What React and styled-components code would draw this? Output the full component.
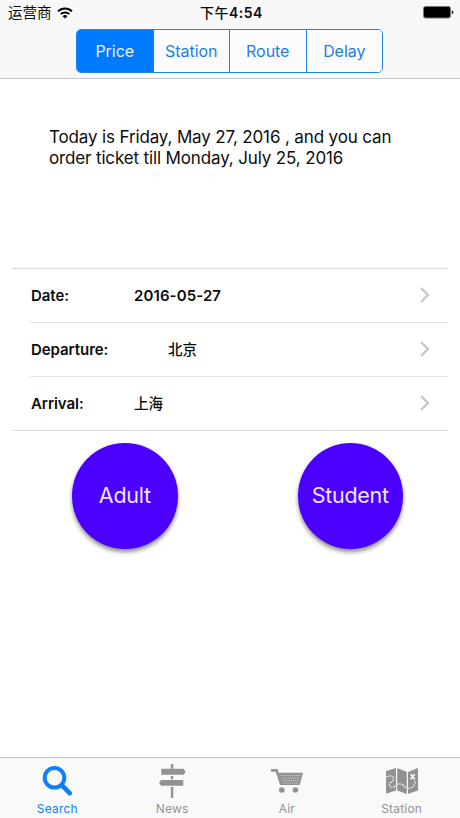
import React from "react";
import styled, { createGlobalStyle } from "styled-components";

const segments = ["Price", "Station", "Route", "Delay"];

const rows = [
    { label: "Date:", value: "2016-05-27", weight: 600 },
    { label: "Departure:", value: "北京", weight: 500, inset: 34 },
    { label: "Arrival:", value: "上海", weight: 500 },
];

const tabs = [
    { label: "Search", icon: SearchIcon },
    { label: "News", icon: SignIcon },
    { label: "Air", icon: CartIcon },
    { label: "Station", icon: MapIcon },
];

function App() {
    return (
        <Screen>
            <GlobalStyle />
            <NavBar>
                <StatusBar>
                    <Carrier>
                        运营商
                        <WifiIcon />
                    </Carrier>
                    <Clock>
                        <Meridiem>下午</Meridiem>4:54
                    </Clock>
                    <BatterySlot>
                        <BatteryIcon />
                    </BatterySlot>
                </StatusBar>
                <Segmented>
                    {segments.map((name, i) => (
                        <Segment key={name} $active={i === 0}>
                            {name}
                        </Segment>
                    ))}
                </Segmented>
            </NavBar>
            <Notice>
                Today is Friday, May 27, 2016 , and you can
                <br />
                order ticket till Monday, July 25, 2016
            </Notice>
            <Form>
                {rows.map((row) => (
                    <Row key={row.label}>
                        <Label>{row.label}</Label>
                        <Value $inset={row.inset} $weight={row.weight}>
                            {row.value}
                        </Value>
                        <ChevronIcon />
                    </Row>
                ))}
            </Form>
            <Actions>
                <RoundButton>Adult</RoundButton>
                <RoundButton>Student</RoundButton>
            </Actions>
            <TabBar>
                {tabs.map(({ label, icon: Icon }, i) => (
                    <Tab key={label} $active={i === 0}>
                        <Icon />
                        <TabLabel>{label}</TabLabel>
                    </Tab>
                ))}
            </TabBar>
        </Screen>
    );
}

export default App;

function WifiIcon() {
    return (
        <svg width="16" height="12" viewBox="0 0 16 12" fill="none" stroke="#000" strokeWidth="1.9">
            <path d="M1 4.4a10 10 0 0 1 14 0" />
            <path d="M3.7 7.2a6.1 6.1 0 0 1 8.6 0" />
            <path d="M8 11.6 5.6 9.2a3.4 3.4 0 0 1 4.8 0z" fill="#000" stroke="none" />
        </svg>
    );
}

function BatteryIcon() {
    return (
        <svg width="31" height="13" viewBox="0 0 31 13">
            <rect x="0.5" y="0.5" width="27" height="11.5" rx="2" fill="#000" stroke="#777" />
            <path d="M28.8 4.2q1.6.6 1.6 2.1t-1.6 2.1z" fill="#222" />
        </svg>
    );
}

function ChevronIcon() {
    return (
        <svg width="10" height="16" viewBox="0 0 10 16" fill="none" stroke="#c4c4c8" strokeWidth="2.1">
            <path d="M1 0.9 8 8l-7 7.1" />
        </svg>
    );
}

function SearchIcon() {
    return (
        <svg width="40" height="38" viewBox="0 0 40 38" fill="none" stroke="currentColor">
            <circle cx="17.5" cy="15.8" r="9.8" strokeWidth="4" />
            <path d="m25 23.4 7.7 7.7" strokeWidth="4.8" strokeLinecap="round" />
        </svg>
    );
}

function SignIcon() {
    return (
        <svg width="40" height="38" viewBox="0 0 40 38" fill="currentColor">
            <path d="M18.9 2h2.4v4.7h-2.4zM18.9 14h2.4v3.2h-2.4zM18.9 25h2.4v11h-2.4z" />
            <path d="M9.3 6.8h22.2l2.2 3-2.2 3H9.3zM31.3 18H9.2L7 20.9l2.2 2.9h22.1z" />
        </svg>
    );
}

function CartIcon() {
    return (
        <svg width="40" height="38" viewBox="0 0 40 38" fill="currentColor">
            <path d="M4 7h6.5l1 3.8H36L32.7 23H13L8.8 9.8H4z" />
            <circle cx="14.8" cy="28" r="2.8" />
            <circle cx="28.4" cy="28" r="2.8" />
            <g stroke="#dcdcdc" strokeWidth="0.9" strokeDasharray="1.1 1.1">
                <path d="M13.5 13.5h20M14.5 16h18M15 18.5h17M16 21h15" />
            </g>
        </svg>
    );
}

function MapIcon() {
    return (
        <svg width="40" height="38" viewBox="0 0 40 38" fill="currentColor">
            <path d="M4 9 14 6v22.5l-10 3.3zM15.2 6l9.6 4v22l-9.6-3.5zM26 10l10-4v22.5l-10 3.5z" />
            <path
                d="M4 15q7-2.5 7.5 1t-4 5q-1 4.5 4 4.5 4-5 9-3 4 5 8 3.5 6-2.5 4-8"
                fill="none"
                stroke="#e4e4e4"
                strokeWidth="1.3"
                strokeDasharray="2.4 0.8"
            />
            <path d="m28.7 12.2 4 5m0-5-4 5" stroke="#f9f9f9" strokeWidth="1.8" />
        </svg>
    );
}

const GlobalStyle = createGlobalStyle`
    body {
        margin: 0;
        background: #fff;
    }
`;

const Screen = styled.div`
    box-sizing: border-box;
    width: 460px;
    height: 818px;
    display: flex;
    flex-direction: column;
    background: #fff;
    color: #0c0c0c;
    font-family: Inter, "Noto Sans CJK SC", sans-serif;
    overflow: hidden;
`;

const NavBar = styled.header`
    box-sizing: border-box;
    height: 79px;
    flex: none;
    background: #f8f8f8;
    border-bottom: 1px solid #c6c6c8;
`;

const StatusBar = styled.div`
    height: 29px;
    padding: 0 6px 4px 8px;
    box-sizing: border-box;
    display: grid;
    grid-template-columns: 1fr auto 1fr;
    align-items: center;
    font-size: 14.5px;
    line-height: 20px;
`;

const Carrier = styled.div`
    display: flex;
    align-items: center;
    gap: 5px;
`;

const Clock = styled.div`
    padding-left: 1px;
    font-weight: 600;
    font-size: 14px;
    letter-spacing: 0.5px;
`;

const Meridiem = styled.span`
    font-weight: 500;
`;

const BatterySlot = styled.div`
    display: flex;
    justify-content: flex-end;
`;

const Segmented = styled.div`
    box-sizing: border-box;
    width: 307px;
    height: 44px;
    margin: 0 0 0 76px;
    display: flex;
    border: 1px solid #2384e8;
    border-radius: 5px;
    overflow: hidden;
`;

const Segment = styled.button`
    flex: 1;
    padding: 0;
    border: none;
    background: ${(props) => (props.$active ? "#007aff" : "#fbfbfb")};
    color: ${(props) => (props.$active ? "#e8f2ff" : "#1f7fe0")};
    font-family: inherit;
    font-size: 16px;
    letter-spacing: -0.05px;

    & + & {
        border-left: 1px solid #2384e8;
    }
`;

const Notice = styled.p`
    height: 141px;
    flex: none;
    margin: 0;
    padding: 48px 0 0 49px;
    font-size: 17px;
    line-height: 20.5px;
    letter-spacing: -0.14px;
    white-space: nowrap;
`;

const Form = styled.div`
    flex: none;
    margin: 0 12px;
    border-top: 1px solid #dcdcdc;
    border-bottom: 1px solid #dcdcdc;
`;

const Row = styled.div`
    height: 53px;
    box-sizing: border-box;
    margin-left: 18px;
    padding: 0 18px 1px 1px;
    display: flex;
    align-items: center;
    font-size: 15px;
    font-weight: 600;
    letter-spacing: -0.05px;

    & + & {
        height: 54px;
        border-top: 1px solid #e2e2e2;
    }
`;

const Label = styled.span`
    width: 103px;
`;

const Value = styled.span`
    flex: 1;
    padding-left: ${(props) => props.$inset || 0}px;
    font-weight: ${(props) => props.$weight};
    font-size: ${(props) => (props.$weight === 600 ? 15 : 14.5)}px;
    line-height: 20px;
    letter-spacing: ${(props) => (props.$weight === 600 ? 0.1 : 0)}px;
    padding-top: 1px;
`;

const Actions = styled.div`
    display: flex;
    justify-content: space-between;
    padding: 12px 57px 0 72px;
`;

const RoundButton = styled.button`
    width: 105.5px;
    height: 105.5px;
    padding: 0 0 2px;
    border: none;
    border-radius: 50%;
    background: #4b00ff;
    color: #f0e4ff;
    font-family: inherit;
    font-size: 21.5px;
    letter-spacing: -0.3px;
    box-shadow: 0 3px 4px rgba(0, 0, 0, 0.45);
`;

const TabBar = styled.nav`
    box-sizing: border-box;
    height: 61px;
    margin-top: auto;
    padding-right: 1px;
    display: flex;
    background: #f9f9f9;
    border-top: 1px solid #c0c0c0;
`;

const Tab = styled.div`
    flex: 1;
    display: flex;
    flex-direction: column;
    align-items: center;
    padding-top: 4px;
    color: ${(props) => (props.$active ? "#0f7ffa" : "#929292")};
`;

const TabLabel = styled.span`
    font-size: 12px;
    line-height: 16px;
    letter-spacing: 0.2px;
    margin-top: 1px;
`;
